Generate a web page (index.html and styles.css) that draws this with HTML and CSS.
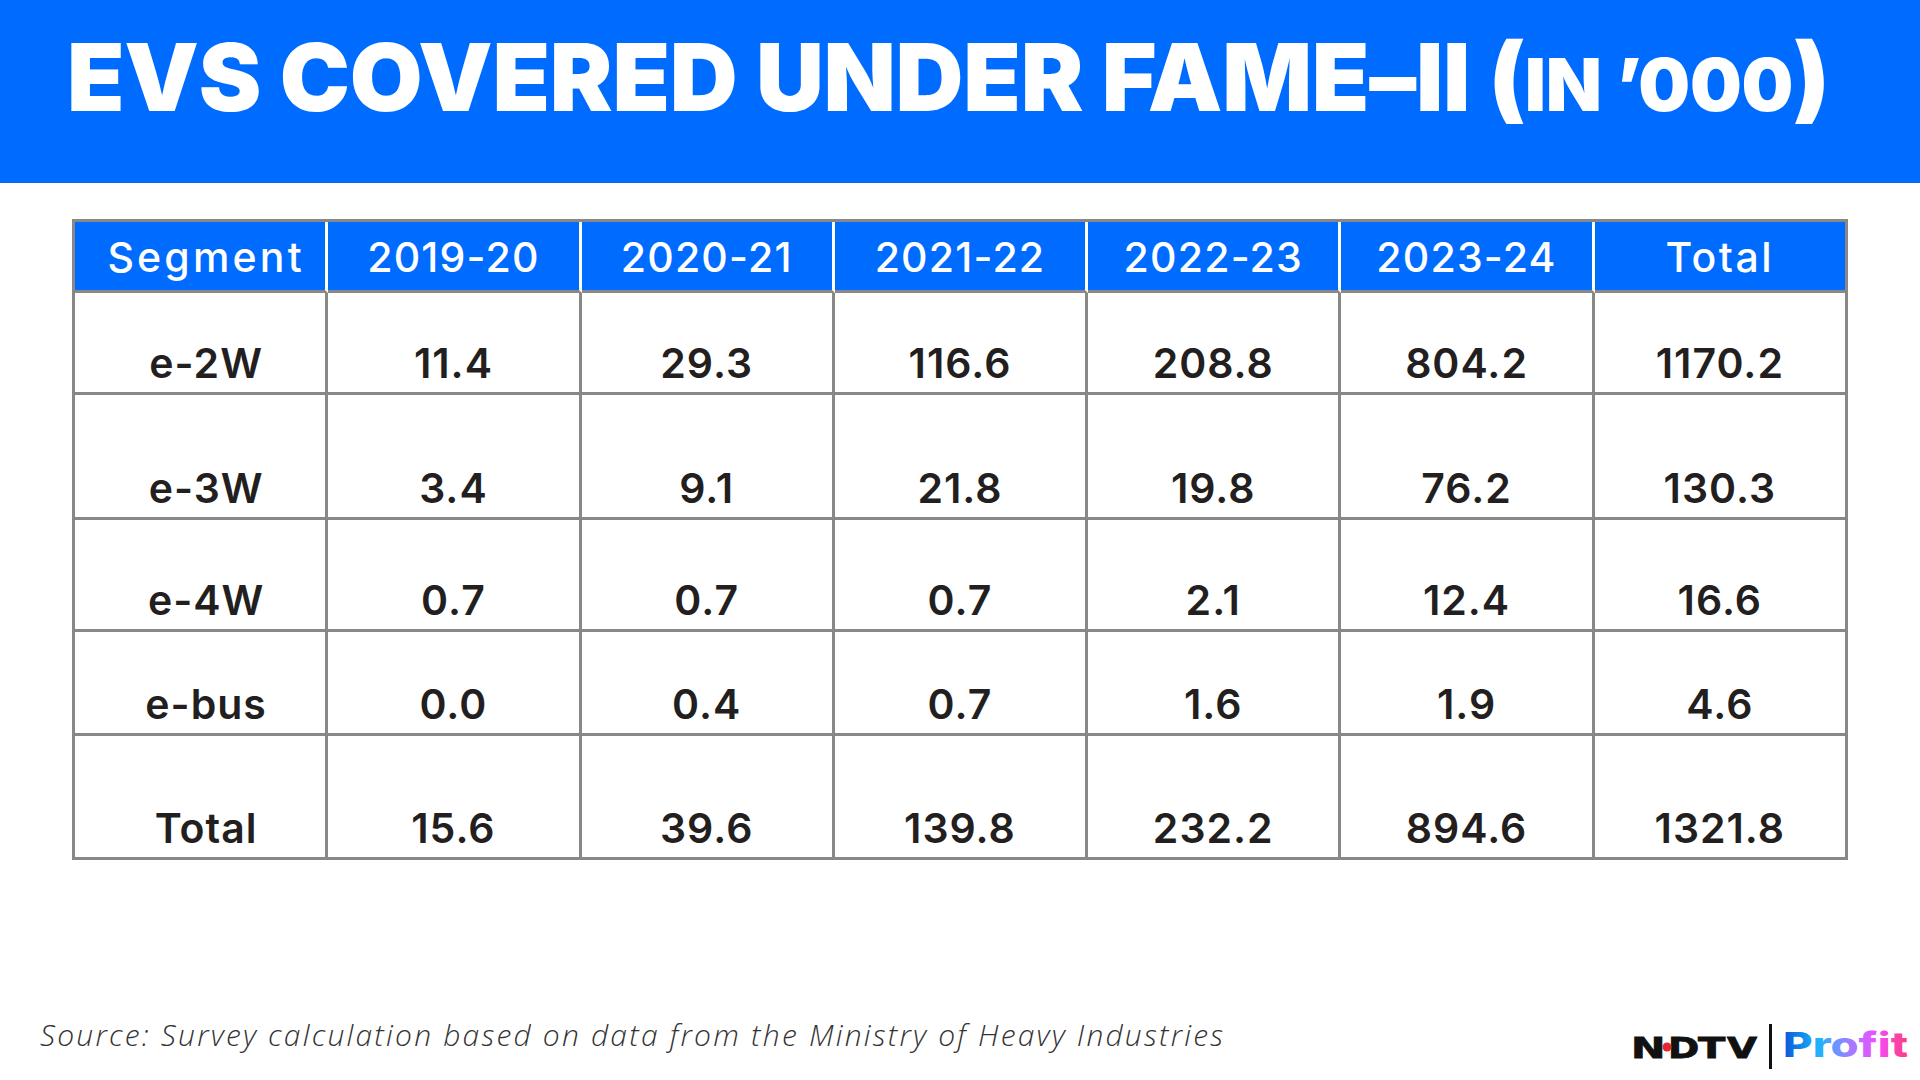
FILE: index.html
```html
<!DOCTYPE html>
<html lang="en">
<head>
<meta charset="utf-8">
<title>EVs covered under FAME-II</title>
<link rel="stylesheet" href="styles.css">
</head>
<body>
<div class="page">
  <header class="banner">
    <h1 class="title">EVS COVERED UNDER FAME–II <span class="paren">(</span><span class="unit">IN ’000</span><span class="paren">)</span></h1>
  </header>
  <main class="content">
    <table class="data">
      <thead>
        <tr class="head-row">
          <th class="first">Segment</th>
          <th>2019-20</th>
          <th>2020-21</th>
          <th>2021-22</th>
          <th>2022-23</th>
          <th>2023-24</th>
          <th class="last">Total</th>
        </tr>
      </thead>
      <tbody>
        <tr class="r1"><td class="first">e-2W</td><td>11.4</td><td>29.3</td><td>116.6</td><td>208.8</td><td>804.2</td><td>1170.2</td></tr>
        <tr class="r2"><td class="first">e-3W</td><td>3.4</td><td>9.1</td><td>21.8</td><td>19.8</td><td>76.2</td><td>130.3</td></tr>
        <tr class="r3"><td class="first">e-4W</td><td>0.7</td><td>0.7</td><td>0.7</td><td>2.1</td><td>12.4</td><td>16.6</td></tr>
        <tr class="r4"><td class="first">e-bus</td><td>0.0</td><td>0.4</td><td>0.7</td><td>1.6</td><td>1.9</td><td>4.6</td></tr>
        <tr class="r5"><td class="first">Total</td><td>15.6</td><td>39.6</td><td>139.8</td><td>232.2</td><td>894.6</td><td>1321.8</td></tr>
      </tbody>
    </table>
  </main>
  <footer class="foot">
    <p class="source">Source: Survey calculation based on data from the Ministry of Heavy Industries</p>
    <svg class="logo" width="282" height="52" viewBox="0 0 282 52" xmlns="http://www.w3.org/2000/svg">
      <defs>
        <linearGradient id="pg" x1="155" y1="0" x2="280" y2="0" gradientUnits="userSpaceOnUse">
          <stop offset="0" stop-color="#0a56d4"/>
          <stop offset="0.28" stop-color="#1db4ff"/>
          <stop offset="0.52" stop-color="#9a80ff"/>
          <stop offset="0.75" stop-color="#f24dff"/>
          <stop offset="1" stop-color="#ff3c7c"/>
        </linearGradient>
      </defs>
      <g class="ndtv">
        <text transform="translate(3 38) scale(1.42 1)">N</text>
        <text transform="translate(40 38) scale(1.3 1)">D</text>
        <text transform="translate(70 38) scale(1.38 1)">T</text>
        <text transform="translate(99 38) scale(1.34 1)">V</text>
      </g>
      <circle cx="39" cy="27" r="4.5" fill="#e8262b"/>
      <rect x="141" y="4" width="3" height="45" fill="#111"/>
      <text class="profit" x="155" y="37" textLength="125" lengthAdjust="spacingAndGlyphs" fill="url(#pg)">Profit</text>
    </svg>
  </footer>
</div>
</body>
</html>
```
FILE: styles.css
```css
html, body {
  margin: 0;
  padding: 0;
  background: #ffffff;
}

.page {
  width: 1920px;
  height: 1080px;
  display: flex;
  flex-direction: column;
  overflow: hidden;
}

.banner {
  height: 183px;
  box-sizing: border-box;
  background: #006cff;
  padding: 30px 0 0 67px;
}

.title {
  margin: 0;
  font-family: Inter, "Liberation Sans", sans-serif;
  font-weight: 900;
  font-size: 94px;
  line-height: 94px;
  letter-spacing: -0.25px;
  color: #ffffff;
  white-space: nowrap;
}

.unit {
  font-size: 73px;
}

.content {
  padding: 36px 0 0 72px;
}

.data {
  width: 1776px;
  table-layout: fixed;
  border-collapse: separate;
  border-spacing: 0;
  border-top: 3px solid #888888;
  border-left: 3px solid #888888;
  font-family: Inter, "Liberation Sans", sans-serif;
  font-size: 41px;
  line-height: 41px;
}

.data th,
.data td {
  padding: 0;
  text-align: center;
  white-space: nowrap;
  border-right: 3px solid #888888;
  border-bottom: 3px solid #888888;
}

.data th {
  background: #006cff;
  color: #ffffff;
  font-weight: 500;
  letter-spacing: 1.2px;
  vertical-align: middle;
  padding-top: 2px;
  border-right-color: #ffffff;
}

.data th.first {
  letter-spacing: 3.2px;
}

.data th.last {
  border-right-color: #888888;
  letter-spacing: 2.5px;
}

.data td {
  color: #231f20;
  font-weight: 600;
  letter-spacing: 1px;
  vertical-align: bottom;
  padding-bottom: 8px;
}

.data .first {
  padding-left: 12px;
}

.head-row { height: 71px; }
.r1 { height: 102px; }
.r2 { height: 125px; }
.r3 { height: 112px; }
.r4 { height: 104px; }
.r5 { height: 124px; }

.foot {
  margin-top: auto;
  display: flex;
  justify-content: space-between;
  align-items: flex-end;
  padding: 0 10px 0 40px;
}

.source {
  margin: 0 0 31px 0;
  font-family: "Open Sans", "Liberation Sans", sans-serif;
  font-style: italic;
  font-weight: 300;
  font-size: 30px;
  line-height: 29px;
  letter-spacing: 2.2px;
  color: #333333;
  white-space: nowrap;
}

.logo {
  display: block;
  margin-bottom: 8px;
}

.ndtv text {
  font-family: "DejaVu Sans", "Liberation Sans", sans-serif;
  font-weight: 700;
  font-size: 29px;
  fill: #111111;
  stroke: #111111;
  stroke-width: 0.8px;
}

.profit {
  font-family: Inter, "Liberation Sans", sans-serif;
  font-weight: 800;
  font-size: 34px;
}
```
